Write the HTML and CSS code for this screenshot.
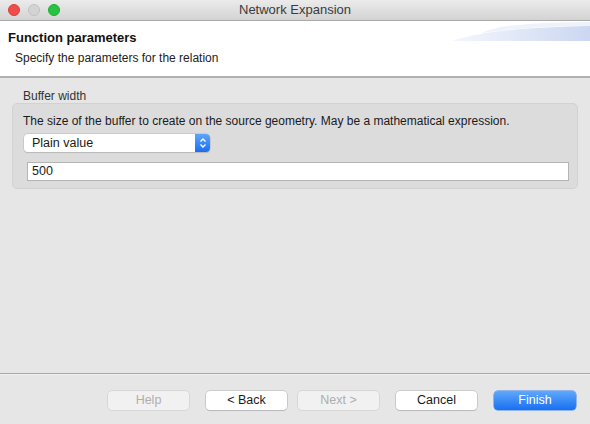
FILE: index.html
```html
<!DOCTYPE html>
<html>
<head>
<meta charset="utf-8">
<link rel="stylesheet" href="styles.css">
</head>
<body>
<div class="window">
  <div class="titlebar">
    <div class="lights">
      <span class="light red"></span>
      <span class="light gray"></span>
      <span class="light green"></span>
    </div>
    <div class="title">Network Expansion</div>
  </div>
  <div class="header">
    <svg class="swoosh" width="150" height="22" viewBox="0 0 150 22">
      <defs>
        <linearGradient id="g" x1="0" y1="0" x2="1" y2="0">
          <stop offset="0" stop-color="#f4f7fc"/>
          <stop offset="1" stop-color="#cbd7f2"/>
        </linearGradient>
      </defs>
      <path d="M12 20 C40 10 90 6 150 5 L150 20 Z" fill="url(#g)"/>
      <path d="M60 6 C90 2 120 1 150 1 L150 5 C110 5 80 7 40 12 Z" fill="#eef2fa"/>
    </svg>
    <div class="h-title">Function parameters</div>
    <div class="h-sub">Specify the parameters for the relation</div>
  </div>
  <div class="body">
    <div class="group-label">Buffer width</div>
    <div class="group">
      <div class="desc">The size of the buffer to create on the source geometry. May be a mathematical expression.</div>
      <div class="select">
        <span class="select-text">Plain value</span>
        <span class="stepper">
          <svg width="8" height="12" viewBox="0 0 8 12">
            <path d="M1.5 4.5 L4 2 L6.5 4.5 M1.5 7.5 L4 10 L6.5 7.5" fill="none" stroke="#fff" stroke-width="1.4"/>
          </svg>
        </span>
      </div>
      <div class="input">500</div>
    </div>
  </div>
  <div class="footer">
    <button class="btn disabled">Help</button>
    <button class="btn">&lt; Back</button>
    <button class="btn disabled">Next &gt;</button>
    <button class="btn cancel">Cancel</button>
    <button class="btn primary">Finish</button>
  </div>
</div>
</body>
</html>
```

FILE: styles.css
```css
* { box-sizing: border-box; }
html, body { margin: 0; padding: 0; }
body {
  width: 590px;
  height: 424px;
  overflow: hidden;
  font-family: "Liberation Sans", Arial, sans-serif;
  font-size: 13px;
  color: #1a1a1a;
  background: #e6e6e6;
}
.window {
  width: 590px;
  height: 424px;
  display: flex;
  flex-direction: column;
}
.titlebar {
  height: 21px;
  flex: none;
  background: linear-gradient(#ebebeb, #d3d3d3);
  border-bottom: 1px solid #a9a9a9;
  display: flex;
  align-items: center;
  position: relative;
}
.lights {
  display: flex;
  gap: 8px;
  padding-left: 8px;
}
.light {
  width: 12px;
  height: 12px;
  border-radius: 50%;
  display: block;
}
.red { background: #ed4e4b; border: 1px solid #de3c39; }
.gray { background: #d3d3d3; border: 1px solid #c2c2c2; }
.green { background: #29c43f; border: 1px solid #1ead31; }
.title {
  position: absolute;
  left: 0;
  right: 0;
  text-align: center;
  color: #3b3b3b;
  font-size: 13px;
  line-height: 20px;
}
.header {
  height: 57px;
  flex: none;
  background: #fff;
  border-bottom: 2px solid #b0b0b0;
  position: relative;
  padding: 9px 0 0 8px;
}
.swoosh {
  position: absolute;
  right: 0;
  top: 0;
}
.h-title {
  font-weight: bold;
  font-size: 13px;
  color: #111;
  line-height: 16px;
}
.h-sub {
  padding-left: 7px;
  margin-top: 5px;
  font-size: 12px;
  color: #222;
  line-height: 14px;
}
.body {
  flex: 1;
  padding: 11px 12px 0 12px;
  border-bottom: 1px solid #a8a8a8;
}
.group-label {
  padding-left: 11px;
  font-size: 12px;
  color: #333;
  line-height: 14px;
}
.group {
  background: #dcdcdc;
  border: 1px solid #d2d2d2;
  border-radius: 5px;
  height: 86px;
  padding: 9px 8px 0 10px;
}
.desc {
  line-height: 16px;
  font-size: 12px;
  color: #1a1a1a;
}
.select {
  margin-top: 5px;
  margin-left: 1px;
  width: 186px;
  height: 18px;
  background: #fff;
  border-radius: 4px;
  box-shadow: 0 0 0 0.5px #b8b8b8, 0 1px 1px rgba(0,0,0,0.15);
  display: flex;
  align-items: center;
  overflow: hidden;
}
.select-text {
  flex: 1;
  padding-left: 8px;
  font-size: 12.5px;
}
.stepper {
  width: 15px;
  height: 18px;
  background: linear-gradient(#5ea6fb, #1a6ff0);
  display: flex;
  align-items: center;
  justify-content: center;
}
.input {
  margin-top: 10px;
  margin-left: 4px;
  height: 19px;
  background: #fff;
  border: 1px solid #b5b5b5;
  padding-left: 4px;
  font-size: 12.5px;
  line-height: 17px;
}
.footer {
  height: 50px;
  flex: none;
  border-top: 1px solid #f0f0f0;
  display: flex;
  align-items: flex-start;
  padding: 16px 14px 0 108px;
}
.btn {
  width: 81px;
  height: 19px;
  font-family: inherit;
  font-size: 12.5px;
  background: #fff;
  border: none;
  border-radius: 4px;
  box-shadow: 0 0 0 0.5px #b0b0b0, 0 1px 1px rgba(0,0,0,0.15);
  color: #1a1a1a;
  padding: 0;
  line-height: 19px;
  margin-right: 17px;
}
.btn:nth-child(2) { margin-right: 11px; }
.btn:last-child { margin-right: 0; width: 82px; }
.btn.disabled {
  background: #f1f1f1;
  color: #aeaeae;
  box-shadow: 0 0 0 0.5px #c8c8c8;
}
.btn.primary {
  background: linear-gradient(#5fa8fc, #1870f1);
  color: #fff;
  box-shadow: 0 0 0 0.5px #3b82f0;
}
```
